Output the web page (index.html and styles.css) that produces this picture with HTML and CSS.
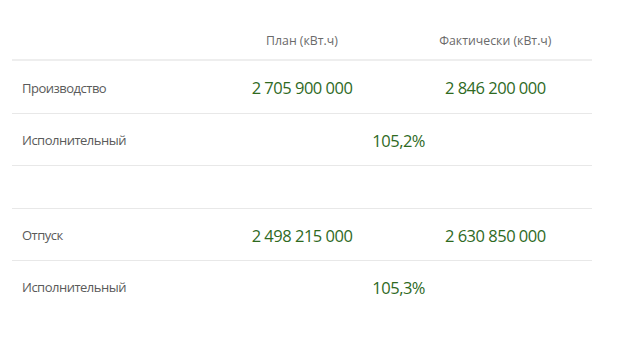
FILE: index.html
```html
<!DOCTYPE html>
<html lang="ru">
<head>
<meta charset="utf-8">
<link rel="stylesheet" href="styles.css">
</head>
<body>
<table class="energy">
  <colgroup><col class="c1"><col class="c2"><col class="c3"></colgroup>
  <thead>
    <tr class="head"><th></th><th>План (кВт.ч)</th><th>Фактически (кВт.ч)</th></tr>
  </thead>
  <tbody>
    <tr class="row r1"><td class="label">Производство</td><td class="num">2 705 900 000</td><td class="num">2 846 200 000</td></tr>
    <tr class="row"><td class="label">Исполнительный</td><td class="num" colspan="2">105,2%</td></tr>
    <tr class="spacer"><td colspan="3"></td></tr>
    <tr class="row"><td class="label">Отпуск</td><td class="num">2 498 215 000</td><td class="num">2 630 850 000</td></tr>
    <tr class="row last"><td class="label">Исполнительный</td><td class="num" colspan="2">105,3%</td></tr>
  </tbody>
</table>
</body>
</html>
```
FILE: styles.css
```css
html, body { background: #fff; }
body { margin: 0; padding: 0 28px 0 12px; font-family: "Open Sans", "Noto Sans", sans-serif; }
.energy { width: 580px; border-collapse: collapse; table-layout: fixed; }
.energy col { width: 33.333%; }
.head th { height: 60px; padding: 22px 10px 0; vertical-align: middle; font-weight: 400; font-size: 12.3px; color: #6a6a6a; text-align: center; border-bottom: 2px solid #eeeeee; box-sizing: border-box; }
.row td { height: 52px; padding: 2px 10px 0; border-bottom: 1px solid #e8e8e8; vertical-align: middle; box-sizing: border-box; }
.row.r1 td { height: 53px; }
.row.last td { border-bottom: none; }
.spacer td { height: 42px; padding: 0; border-bottom: 1px solid #e8e8e8; }
.label { font-size: 13px; letter-spacing: -0.5px; color: #5a5a5a; text-align: left; }
.num { font-size: 16.5px; letter-spacing: -0.5px; color: #2f6a1f; text-align: center; }
```
